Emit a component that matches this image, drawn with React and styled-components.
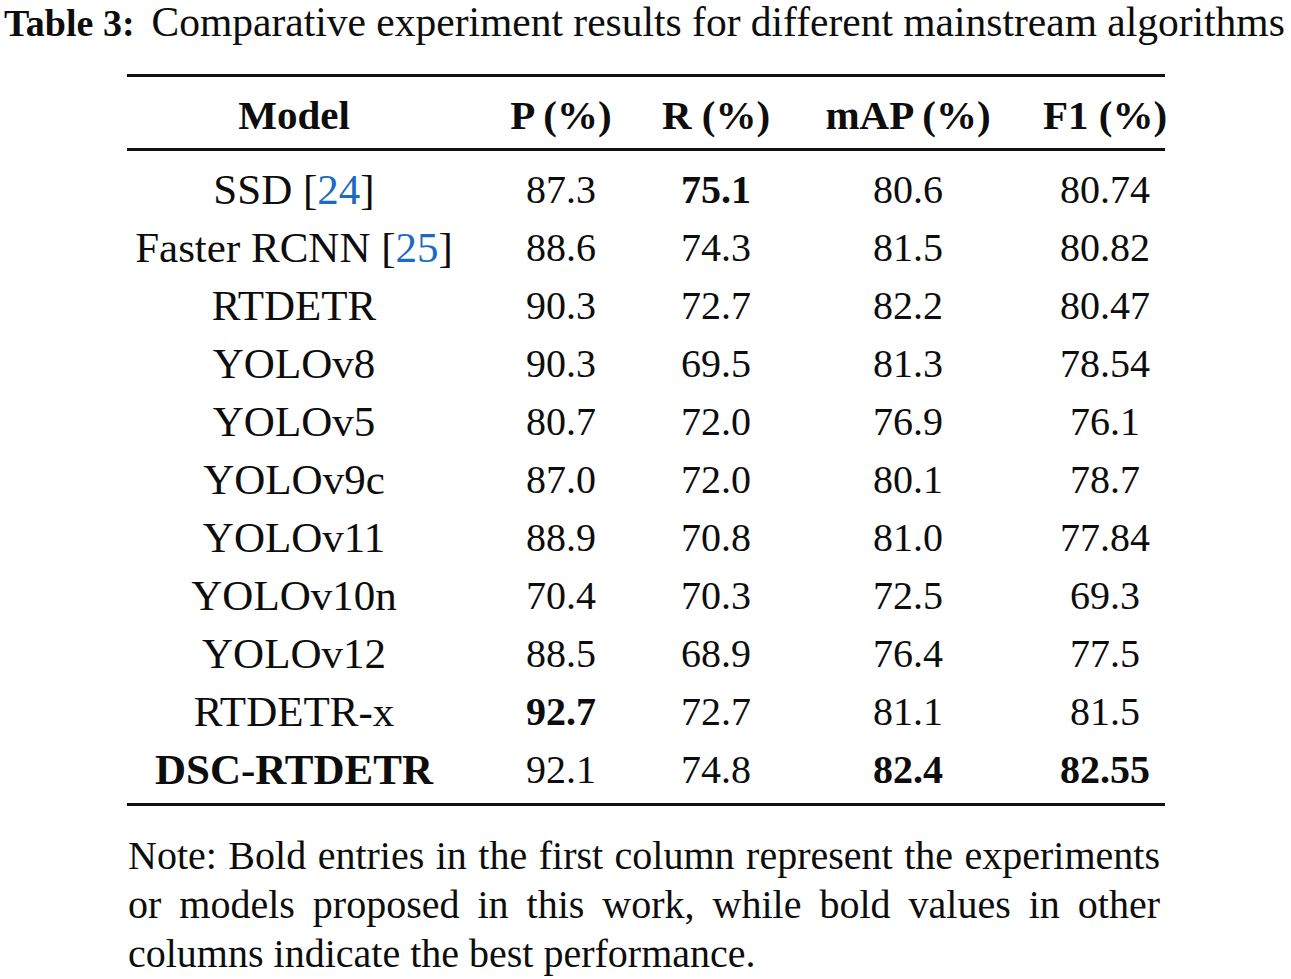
import React from 'react';
import styled, { createGlobalStyle } from 'styled-components';

const GlobalStyle = createGlobalStyle`
  html, body {
    margin: 0;
    padding: 0;
    background: #fff;
  }
  body {
    font-family: "Liberation Serif", "Times New Roman", serif;
    color: #0d0d0d;
  }
`;

const Page = styled.div`
  width: 1291px;
  height: 979px;
  overflow: hidden;
  background: #fff;
`;

const Caption = styled.div`
  font-size: 41.5px;
  line-height: 44px;
  padding: 0 0 0 4px;
  white-space: nowrap;
  b {
    font-size: 38px;
    font-weight: 700;
    margin-right: 17px;
  }
`;

const Table = styled.table`
  margin: 29px 0 0 127px;
  width: 1038px;
  border-collapse: collapse;
  border-top: 3px solid #111;
  border-bottom: 3px solid #111;
  table-layout: fixed;
`;

const Head = styled.thead`
  border-bottom: 3px solid #111;
`;

const Th = styled.th`
  width: ${p => p.$w}px;
  height: 67px;
  padding: 4px 0 0;
`;

const HeadLabel = styled.div`
  display: flex;
  justify-content: center;
  font-size: 41px;
  font-weight: 700;
  white-space: nowrap;
`;

const Td = styled.td`
  font-size: ${p => (p.$name ? 43 : 40)}px;
  font-weight: ${p => (p.$bold ? 700 : 400)};
  height: 58px;
  padding: 0;
  text-align: center;
  white-space: nowrap;
`;

const SpacerCell = styled.td`
  height: ${p => p.$h}px;
  padding: 0;
`;

const Ref = styled.span`
  color: #1a6cc0;
`;

const Note = styled.div`
  margin: 25px 0 0 128px;
  width: 1032px;
  font-size: 40px;
  line-height: 49px;
`;

const NoteLine = styled.div`
  white-space: nowrap;
  text-align: ${p => (p.$last ? 'left' : 'justify')};
  text-align-last: ${p => (p.$last ? 'left' : 'justify')};
`;

const widths = [334, 200, 110, 274, 120];
const headers = ['Model', 'P (%)', 'R (%)', 'mAP (%)', 'F1 (%)'];

const rows = [
  { name: 'SSD', ref: '24', vals: ['87.3', '75.1', '80.6', '80.74'], bold: [false, true, false, false] },
  { name: 'Faster RCNN', ref: '25', vals: ['88.6', '74.3', '81.5', '80.82'] },
  { name: 'RTDETR', vals: ['90.3', '72.7', '82.2', '80.47'] },
  { name: 'YOLOv8', vals: ['90.3', '69.5', '81.3', '78.54'] },
  { name: 'YOLOv5', vals: ['80.7', '72.0', '76.9', '76.1'] },
  { name: 'YOLOv9c', vals: ['87.0', '72.0', '80.1', '78.7'] },
  { name: 'YOLOv11', vals: ['88.9', '70.8', '81.0', '77.84'] },
  { name: 'YOLOv10n', vals: ['70.4', '70.3', '72.5', '69.3'] },
  { name: 'YOLOv12', vals: ['88.5', '68.9', '76.4', '77.5'] },
  { name: 'RTDETR-x', vals: ['92.7', '72.7', '81.1', '81.5'], bold: [true, false, false, false] },
  { name: 'DSC-RTDETR', nameBold: true, vals: ['92.1', '74.8', '82.4', '82.55'], bold: [false, false, true, true] },
];

const noteLines = [
  'Note: Bold entries in the first column represent the experiments',
  'or models proposed in this work, while bold values in other',
  'columns indicate the best performance.',
];

export default function App() {
  return (
    <Page>
      <GlobalStyle />
      <Caption>
        <b>Table 3:</b>Comparative experiment results for different mainstream algorithms
      </Caption>
      <Table>
        <Head>
          <tr>
            {headers.map((h, i) => (
              <Th key={h} $w={widths[i]}>
                <HeadLabel>{h}</HeadLabel>
              </Th>
            ))}
          </tr>
        </Head>
        <tbody>
          <tr><SpacerCell colSpan={5} $h={9} /></tr>
          {rows.map(r => (
            <tr key={r.name}>
              <Td $name $bold={r.nameBold}>
                {r.name}
                {r.ref && (
                  <> [<Ref>{r.ref}</Ref>]</>
                )}
              </Td>
              {r.vals.map((v, i) => (
                <Td key={i} $bold={r.bold && r.bold[i]}>{v}</Td>
              ))}
            </tr>
          ))}
          <tr><SpacerCell colSpan={5} $h={5} /></tr>
        </tbody>
      </Table>
      <Note>
        {noteLines.map((l, i) => (
          <NoteLine key={i} $last={i === noteLines.length - 1}>{l}</NoteLine>
        ))}
      </Note>
    </Page>
  );
}
